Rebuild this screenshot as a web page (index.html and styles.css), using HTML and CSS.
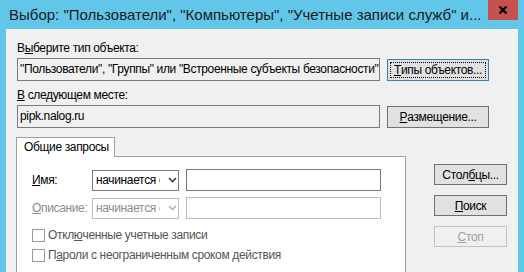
FILE: index.html
```html
<!DOCTYPE html>
<html lang="ru">
<head>
  <meta charset="UTF-8">
  <title>Выбор объектов</title>
  <link rel="stylesheet" href="styles.css">
</head>
<body>
  <div class="window">
    <div class="titlebar">
      <div class="title">Выбор: "Пользователи", "Компьютеры", "Учетные записи служб" и...</div>
      <div class="close">
        <svg width="10" height="10" viewBox="0 0 10 10"><path d="M1.5 1.5 L8.5 8.5 M8.5 1.5 L1.5 8.5" stroke="#000" stroke-width="2.2" fill="none"/></svg>
      </div>
    </div>

    <div class="client">
      <div class="label">В<u>ы</u>берите тип объекта:</div>
      <div class="row">
        <div class="field">"Пользователи", "Группы" или "Встроенные субъекты безопасности"</div>
        <button class="btn btn-wide btn-focus"><span class="focus-ring"><u>Т</u>ипы объектов...</span></button>
      </div>

      <div class="label label-second"><u>В</u> следующем месте:</div>
      <div class="row">
        <div class="field">pipk.nalog.ru</div>
        <button class="btn btn-wide"><u>Р</u>азмещение...</button>
      </div>

      <div class="lower">
        <div class="tabs">
          <div class="tab-strip">
            <div class="tab">Общие запросы</div>
          </div>
          <div class="tab-panel">
            <div class="query-row">
              <span class="q-label"><u>И</u>мя:</span>
              <div class="select">
                <span class="select-text">начинается с</span>
                <svg class="chev" width="9" height="6" viewBox="0 0 9 6"><path d="M1 1 L4.5 4.5 L8 1" stroke="#3c3c3c" stroke-width="1.6" fill="none"/></svg>
              </div>
              <div class="input"></div>
            </div>
            <div class="query-row disabled">
              <span class="q-label"><u>О</u>писание:</span>
              <div class="select">
                <span class="select-text">начинается с</span>
                <svg class="chev" width="9" height="6" viewBox="0 0 9 6"><path d="M1 1 L4.5 4.5 L8 1" stroke="#b4b4b4" stroke-width="1.6" fill="none"/></svg>
              </div>
              <div class="input"></div>
            </div>

            <div class="checks">
              <div class="check"><span class="box"></span>Откл<u>ю</u>ченные учетные записи</div>
              <div class="check"><span class="box"></span>П<u>а</u>роли с неограниченным сроком действия</div>
            </div>
          </div>
        </div>

        <div class="side">
          <button class="btn btn-side">Стол<u>б</u>цы...</button>
          <button class="btn btn-side"><u>П</u>оиск</button>
          <button class="btn btn-side btn-disabled"><u>С</u>топ</button>
        </div>
      </div>
    </div>
  </div>
</body>
</html>
```

FILE: styles.css
```css
:root {
  --frame: #62c6e9;
  --face: #f0f0f0;
  --btn-face: #e1e1e1;
  --btn-border: #707070;
  --edit-border: #7a7a7a;
  --disabled-border: #bcbcbc;
  --disabled-text: #8d8d8d;
  --tab-border: #a0a0a0;
}

* {
  margin: 0;
  padding: 0;
  box-sizing: border-box;
}

body {
  background: var(--frame);
  font-family: "Liberation Sans", Arial, sans-serif;
  font-size: 12px;
  letter-spacing: -0.35px;
  color: #000;
}

u {
  text-decoration: underline;
  text-underline-offset: 1px;
}

.window {
  width: 524px;
  height: 272px;
  overflow: hidden;
  background: var(--frame);
}

/* Title bar */
.titlebar {
  display: flex;
  align-items: flex-start;
  height: 29px;
}

.title {
  flex: 1;
  padding: 5px 0 0 9px;
  font-size: 15px;
  letter-spacing: 0;
  line-height: 20px;
  color: #1a1a1a;
  white-space: nowrap;
  overflow: hidden;
}

.close {
  width: 30px;
  height: 20px;
  margin-right: 6px;
  background: #c75050;
  display: flex;
  align-items: center;
  justify-content: center;
}

/* Client area */
.client {
  margin: 0 6px;
  height: 243px;
  background: var(--face);
  padding: 11px 0 0 11px;
}

.label {
  line-height: 16px;
  margin-bottom: 2px;
}

.label-second {
  margin-top: 6px;
}

.row {
  display: flex;
  align-items: center;
  gap: 7px;
  height: 23px;
}

.field {
  width: 363px;
  flex-shrink: 0;
  height: 23px;
  border: 1px solid var(--edit-border);
  background: var(--face);
  padding: 0 2px;
  line-height: 21px;
  white-space: nowrap;
  overflow: hidden;
}

.btn {
  font-family: inherit;
  font-size: 12px;
  letter-spacing: inherit;
  color: #000;
  background: var(--btn-face);
  border: 1px solid var(--btn-border);
  height: 21px;
  display: flex;
  align-items: center;
  justify-content: center;
  cursor: default;
}

.btn-wide {
  width: 102px;
  flex-shrink: 0;
  height: 22px;
}

.btn-focus {
  border-color: #3c7fb1;
  padding: 2px;
}

.focus-ring {
  flex: 1;
  align-self: stretch;
  display: flex;
  align-items: center;
  justify-content: center;
  outline: 1px dotted #000;
  outline-offset: -1px;
}

/* Lower part: tab control + side buttons */
.lower {
  display: flex;
  margin-top: 9px;
  margin-left: -1px;
}

.tabs {
  width: 390px;
}

.tab-strip {
  height: 19px;
  display: flex;
}

.tab {
  width: 99px;
  height: 20px;
  background: #fff;
  border: 1px solid var(--tab-border);
  border-bottom: none;
  padding-left: 7px;
  line-height: 19px;
  position: relative;
  z-index: 1;
}

.tab-panel {
  height: 120px;
  background: #fff;
  border: 1px solid var(--tab-border);
  padding: 12px 0 0 15px;
}

.query-row {
  display: flex;
  align-items: center;
  height: 22px;
  margin-bottom: 6px;
}

.q-label {
  width: 60px;
}

.select {
  width: 87px;
  height: 21px;
  border: 1px solid var(--edit-border);
  background: #fff;
  display: flex;
  align-items: center;
  padding-left: 3px;
  margin-right: 7px;
}

.select-text {
  width: 64px;
  overflow: hidden;
  white-space: nowrap;
}

.chev {
  margin-left: 8px;
}

.input {
  width: 195px;
  height: 22px;
  border: 1px solid var(--edit-border);
  background: #fff;
}

.disabled .q-label,
.disabled .select-text {
  color: var(--disabled-text);
}

.disabled .select,
.disabled .input {
  border-color: var(--disabled-border);
}

.checks {
  margin-top: 6px;
}

.check {
  display: flex;
  align-items: center;
  height: 20px;
  color: #555;
}

.box {
  width: 13px;
  height: 13px;
  border: 1px solid #9a9a9a;
  background: #fff;
  margin-right: 3px;
}

.side {
  display: flex;
  flex-direction: column;
  gap: 10px;
  padding: 27px 0 0 28px;
}

.btn-side {
  width: 73px;
}

.btn-disabled {
  color: #a0a0a0;
  border-color: #c4c4c4;
  background: #f0f0f0;
}
```
